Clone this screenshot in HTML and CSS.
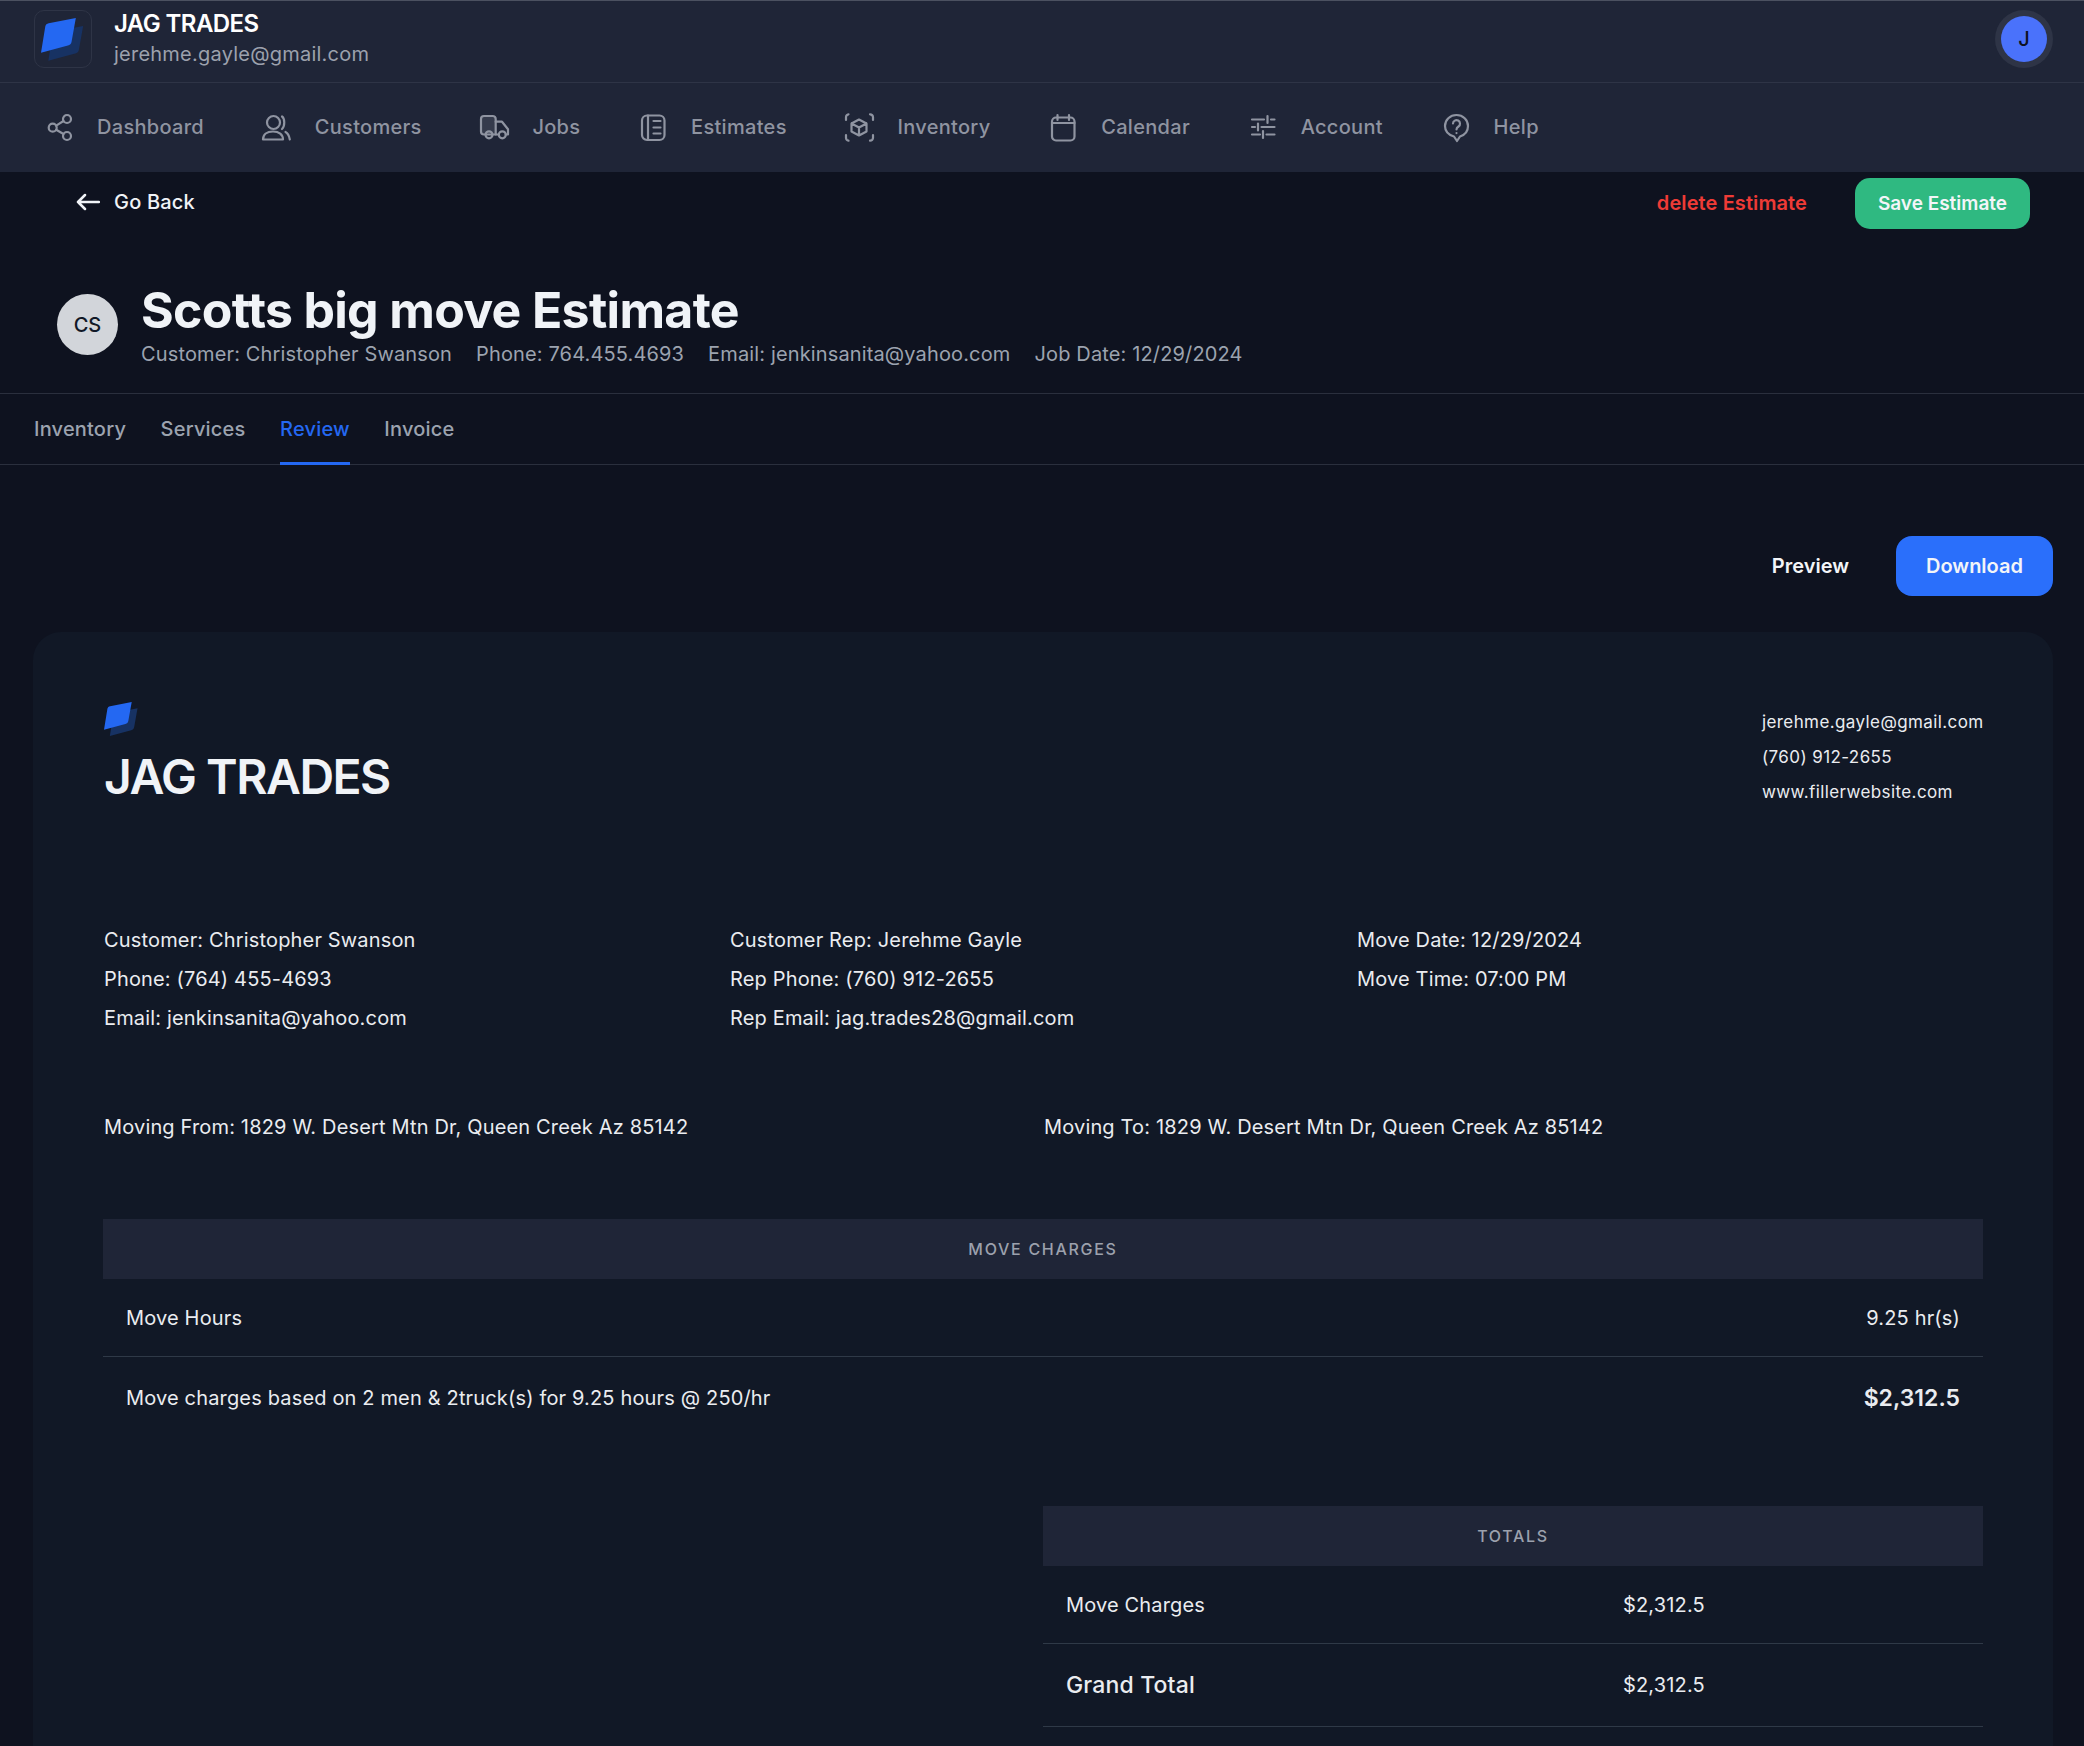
FILE: index.html
```html
<!DOCTYPE html>
<html lang="en">
<head>
    <meta charset="UTF-8">
    <meta name="viewport" content="width=device-width, initial-scale=1.0">
    <title>JAG TRADES - Estimate</title>
    <link rel="stylesheet" href="styles.css">
</head>
<body>
    <header class="app-header">
        <div class="account-bar">
            <div class="logo-box">
                <svg class="logo-mark" viewBox="0 0 36 36"><path fill="#173263" transform="translate(6 6.500)" d="M3.500 7c.3-1.500 1.300-2.400 2.800-2.700L28.500 0 25 19.500c-.3 1.700-1.300 2.700-3 3.100L0 28.500z"/><path fill="#2468f2" d="M3.500 7c.3-1.500 1.300-2.400 2.800-2.700L28.500 0 25 19.500c-.3 1.700-1.300 2.700-3 3.100L0 28.500z"/></svg>
            </div>
            <div class="account-text">
                <div class="account-name">JAG TRADES</div>
                <div class="account-email">jerehme.gayle@gmail.com</div>
            </div>
            <div class="user-ring"><div class="user-avatar">J</div></div>
        </div>
        <nav class="main-nav">
            <a class="nav-item">
                <svg class="nav-icon" viewBox="0 0 28 28"><circle cx="5.700" cy="13.700" r="4"/><circle cx="20" cy="5" r="4"/><circle cx="20" cy="22" r="4"/><path d="M9.200 11.600 16.500 7M9.200 15.800 16.500 20"/></svg>
                <span>Dashboard</span>
            </a>
            <a class="nav-item">
                <svg class="nav-icon" viewBox="0 0 28 28"><circle cx="8.500" cy="8.500" r="6.500"/><path d="M17 2.500c3 2 3 10 0 12.500M-2 25.500c0-5 4-8 10-8s10 3 10 8zM20.500 18c2 1 3.700 4 4.300 7.500"/></svg>
                <span>Customers</span>
            </a>
            <a class="nav-item">
                <svg class="nav-icon" viewBox="0 0 28 28"><path class="duo" d="M3.500 20.500H2a3 3 0 0 1-3-3V5a3 3 0 0 1 3-3h8.700a3 3 0 0 1 3 3v15.500H10.500z"/><path d="M13.700 7.700H20l6 7.600v5.200h-2.200"/><path d="M13.700 20.500h3"/><circle cx="7" cy="20.800" r="3.500"/><circle cx="20.300" cy="20.800" r="3.500"/></svg>
                <span>Jobs</span>
            </a>
            <a class="nav-item">
                <svg class="nav-icon" viewBox="0 0 28 28"><rect x="1" y="1.500" width="22.500" height="24.500" rx="5"/><path class="duo" d="M7 1.500v24.500"/><path d="M12.500 7h7M12.500 13.500h7M12.500 19.500h7"/></svg>
                <span>Estimates</span>
            </a>
            <a class="nav-item">
                <svg class="nav-icon" viewBox="0 0 28 28"><path d="M-1 6V3a3 3 0 0 1 2.500-2.700M23 .300A3 3 0 0 1 26 3v3M26 21v3a3 3 0 0 1-3 2.700M1.500 26.700A3 3 0 0 1-1 24v-3"/><path d="m12 5.500 7.500 4v8l-7.500 4-7.500-4v-8zM4.500 9.500l7.500 4 7.500-4M12 13.500v8"/></svg>
                <span>Inventory</span>
            </a>
            <a class="nav-item">
                <svg class="nav-icon" viewBox="0 0 28 28"><rect x="1" y="3.500" width="22.500" height="23" rx="4"/><path d="M1 9h22.500M6.500 1v5M18 1v5"/></svg>
                <span>Calendar</span>
            </a>
            <a class="nav-item">
                <svg class="nav-icon" viewBox="0 0 28 28"><path d="M1 5.500h12M20 5.500h3.500M1 13h3M10.500 13h13M1 20.500h8M15.500 20.500h8M16.500 2v7M7 9.500v7M12 17v7"/></svg>
                <span>Account</span>
            </a>
            <a class="nav-item">
                <svg class="nav-icon" viewBox="0 0 28 28"><path d="M12.500 1C19 1 24 5.800 24 12c0 5.500-3.500 9-8 10.500L13 27l-3-4.500C5 21 1 17.500 1 12 1 5.800 6 1 12.500 1z"/><path d="M9 9.500a3.500 3.500 0 1 1 5.500 3c-1.300.9-2 1.500-2 3M12.500 19v.1"/></svg>
                <span>Help</span>
            </a>
        </nav>
    </header>

    <main>
        <div class="action-bar">
            <a class="back-link">
                <svg class="back-icon" viewBox="0 0 24 18"><path d="M23 9H2M9 2 2 9l7 7"/></svg>
                <span>Go Back</span>
            </a>
            <a class="delete-link">delete Estimate</a>
            <button class="btn-save">Save Estimate</button>
        </div>

        <section class="estimate-head">
            <div class="customer-avatar">CS</div>
            <div>
                <h1>Scotts big move Estimate</h1>
                <div class="estimate-meta">
                    <span>Customer: Christopher Swanson</span>
                    <span>Phone: 764.455.4693</span>
                    <span>Email: jenkinsanita@yahoo.com</span>
                    <span>Job Date: 12/29/2024</span>
                </div>
            </div>
        </section>

        <div class="tabs">
            <a class="tab">Inventory</a>
            <a class="tab">Services</a>
            <a class="tab active">Review</a>
            <a class="tab">Invoice</a>
        </div>

        <div class="doc-actions">
            <button class="btn-preview">Preview</button>
            <button class="btn-download">Download</button>
        </div>

        <section class="invoice">
            <div class="invoice-top">
                <div>
                    <svg class="invoice-logo" viewBox="0 0 36 36"><path fill="#173263" transform="translate(6 6.500)" d="M3.500 7c.3-1.500 1.300-2.400 2.800-2.700L28.500 0 25 19.500c-.3 1.700-1.300 2.700-3 3.100L0 28.500z"/><path fill="#2468f2" d="M3.500 7c.3-1.500 1.300-2.400 2.800-2.700L28.500 0 25 19.500c-.3 1.700-1.300 2.700-3 3.100L0 28.500z"/></svg>
                    <div class="invoice-company">JAG TRADES</div>
                </div>
                <div class="invoice-contact">
                    <div>jerehme.gayle@gmail.com</div>
                    <div>(760) 912-2655</div>
                    <div>www.fillerwebsite.com</div>
                </div>
            </div>

            <div class="info-grid">
                <div>
                    <div>Customer: Christopher Swanson</div>
                    <div>Phone: (764) 455-4693</div>
                    <div>Email: jenkinsanita@yahoo.com</div>
                </div>
                <div>
                    <div>Customer Rep: Jerehme Gayle</div>
                    <div>Rep Phone: (760) 912-2655</div>
                    <div>Rep Email: jag.trades28@gmail.com</div>
                </div>
                <div>
                    <div>Move Date: 12/29/2024</div>
                    <div>Move Time: 07:00 PM</div>
                </div>
            </div>

            <div class="address-row">
                <div>Moving From: 1829 W. Desert Mtn Dr, Queen Creek Az 85142</div>
                <div>Moving To: 1829 W. Desert Mtn Dr, Queen Creek Az 85142</div>
            </div>

            <table class="charges">
                <tr><th colspan="2">MOVE CHARGES</th></tr>
                <tr class="row-hours"><td>Move Hours</td><td class="num">9.25 hr(s)</td></tr>
                <tr class="row-charge"><td>Move charges based on 2 men &amp; 2truck(s) for 9.25 hours @ 250/hr</td><td class="num amount">$2,312.5</td></tr>
            </table>

            <table class="totals">
                <tr><th colspan="2">TOTALS</th></tr>
                <tr class="row-move"><td>Move Charges</td><td class="total-value">$2,312.5</td></tr>
                <tr class="row-grand"><td class="grand-label">Grand Total</td><td class="total-value">$2,312.5</td></tr>
            </table>
        </section>
    </main>
</body>
</html>
```

FILE: styles.css
```css
/* Estimate review page */
* {
    box-sizing: border-box;
}

html,
body {
    margin: 0;
    height: 1746px;
    overflow: hidden;
}

body {
    font-family: Inter, "Liberation Sans", sans-serif;
    background-color: #0e121f;
    color: #f0f3f7;
}

button {
    font-family: inherit;
    border: none;
    color: #f3f5f8;
}

/* Header */
.app-header {
    background-color: #1f2537;
    border-top: 1px solid #4b5160;
    height: 172px;
}

.account-bar {
    display: flex;
    align-items: center;
    height: 82px;
    padding: 0 31px 5px 34px;
    border-bottom: 1px solid #2e3446;
}

.logo-box {
    width: 58px;
    height: 58px;
    border: 1px solid #2e3446;
    border-radius: 10px;
    padding: 7px 6px;
}

.logo-mark {
    display: block;
    width: 44px;
    height: 44px;
}

.account-text {
    margin-left: 22px;
    flex: 1;
}

.account-name {
    font-size: 24px;
    font-weight: 600;
    letter-spacing: -0.6px;
    line-height: 30px;
    color: #fff;
}

.account-email {
    font-size: 20px;
    letter-spacing: 0.230px;
    line-height: 30px;
    color: #9ca1ad;
}

.user-ring {
    width: 58px;
    height: 58px;
    border-radius: 50%;
    padding: 6px;
    background-color: #2e3446;
}

.user-avatar {
    width: 46px;
    height: 46px;
    border-radius: 50%;
    background-color: #4a72fb;
    color: #0e121f;
    font-size: 20px;
    font-weight: 500;
    display: flex;
    align-items: center;
    justify-content: center;
}

.main-nav {
    display: flex;
    align-items: center;
    gap: 60.750px;
    height: 89px;
    padding: 0 0 2px 47px;
}

.nav-item {
    display: flex;
    align-items: center;
    gap: 22px;
    font-size: 20px;
    font-weight: 500;
    letter-spacing: 0.300px;
    color: #8f94a1;
}

.nav-icon {
    width: 28px;
    height: 28px;
    margin-top: 3px;
    overflow: visible;
    fill: none;
    stroke: #8f94a1;
    stroke-width: 2.200;
    stroke-linecap: round;
    stroke-linejoin: round;
}

.nav-icon .duo {
    fill: rgba(143, 148, 161, 0.2);
}

/* Action bar */
.action-bar {
    display: flex;
    align-items: center;
    height: 62px;
    padding: 1px 54px 0 76px;
}

.back-link {
    display: flex;
    align-items: center;
    gap: 14px;
    font-size: 20px;
    font-weight: 500;
    letter-spacing: 0.200px;
    margin: 0 auto 3px 0;
}

.back-icon {
    width: 24px;
    height: 18px;
    fill: none;
    stroke: #f0f3f7;
    stroke-width: 2.500;
    stroke-linecap: round;
    stroke-linejoin: round;
}

.delete-link {
    font-size: 20px;
    font-weight: 600;
    letter-spacing: 0.100px;
    color: #ef3b36;
    margin: 0 48px 1px 0;
}

.btn-save {
    width: 175px;
    height: 51px;
    margin-bottom: 1px;
    border-radius: 15px;
    background-color: #2fb981;
    font-size: 19px;
    font-weight: 600;
}

/* Estimate heading */
.estimate-head {
    display: flex;
    align-items: flex-start;
    height: 160px;
    padding: 60px 0 0 57px;
    border-bottom: 1px solid #2a2f3d;
}

.customer-avatar {
    width: 61px;
    height: 61px;
    border-radius: 50%;
    background-color: #d2d5da;
    color: #111827;
    font-size: 20px;
    font-weight: 500;
    display: flex;
    align-items: center;
    justify-content: center;
    margin-right: 23px;
}

h1 {
    margin: -14px 0 0;
    font-size: 50px;
    font-weight: 700;
    line-height: 60px;
    letter-spacing: -0.680px;
    color: #f0f3f7;
}

.estimate-meta {
    display: flex;
    gap: 24px;
    font-size: 20px;
    letter-spacing: 0.140px;
    line-height: 28px;
    color: #9ca3af;
}

/* Tabs */
.tabs {
    display: flex;
    gap: 34.500px;
    height: 71px;
    padding: 0 34px;
    border-bottom: 1px solid #2a2f3d;
}

.tab {
    font-size: 20px;
    font-weight: 500;
    letter-spacing: 0.200px;
    line-height: 71px;
    height: 71px;
    color: #9ca3af;
}

.tab.active {
    color: #2468f2;
    border-bottom: 3px solid #2468f2;
}

/* Preview and download */
.doc-actions {
    display: flex;
    align-items: center;
    justify-content: flex-end;
    gap: 47px;
    padding: 71px 31px 36px 0;
}

.btn-preview {
    background: none;
    font-size: 20px;
    font-weight: 600;
    padding: 0;
}

.btn-download {
    width: 157px;
    height: 60px;
    border-radius: 16px;
    background-color: #2a6ffb;
    font-size: 20px;
    font-weight: 600;
}

/* Invoice panel */
.invoice {
    margin: 0 31px 0 33px;
    height: 1200px;
    padding: 70px 70px 0 71px;
    background-color: #111826;
    border-radius: 28px;
    font-size: 20px;
    letter-spacing: 0.160px;
    color: #eaecf0;
}

.invoice-top {
    display: flex;
    justify-content: space-between;
    height: 219px;
}

.invoice-logo {
    display: block;
    width: 35px;
    height: 35px;
}

.invoice-company {
    font-size: 48px;
    font-weight: 600;
    line-height: 56px;
    letter-spacing: -1.500px;
    margin-top: 12px;
    color: #f0f3f7;
}

.invoice-contact {
    font-size: 17px;
    letter-spacing: 0.400px;
    line-height: 35px;
    margin-top: 3px;
    width: 221px;
}

.info-grid {
    display: grid;
    grid-template-columns: 626px 627px 1fr;
    line-height: 39px;
    height: 178px;
}

.address-row {
    display: grid;
    grid-template-columns: 940px 1fr;
    line-height: 28px;
    margin-top: 14px;
}

/* Tables */
table {
    border-collapse: collapse;
    width: 100%;
}

th {
    height: 60px;
    background-color: #1f2537;
    color: #9ca1ad;
    font-size: 16px;
    font-weight: 500;
    letter-spacing: 1.700px;
}

td {
    padding: 0 23px;
}

.charges {
    margin-top: 78px;
    margin-left: -1px;
    width: 1880px;
}

.row-hours td {
    height: 77px;
    padding-top: 2px;
    border-bottom: 1px solid #2f3947;
}

.row-charge td {
    height: 80px;
    padding-top: 4px;
}

.num {
    text-align: right;
}

.charges .amount {
    font-size: 23px;
    font-weight: 600;
    letter-spacing: 0;
}

.totals {
    margin-left: 939px;
    margin-top: 70px;
    width: 940px;
}

.row-move td {
    height: 77px;
    padding-top: 2px;
    border-bottom: 1px solid #2f3947;
}

.row-grand td {
    height: 83px;
    border-bottom: 1px solid #2f3947;
}

.grand-label {
    font-size: 23px;
    font-weight: 500;
}

.total-value {
    width: 383px;
}
```
